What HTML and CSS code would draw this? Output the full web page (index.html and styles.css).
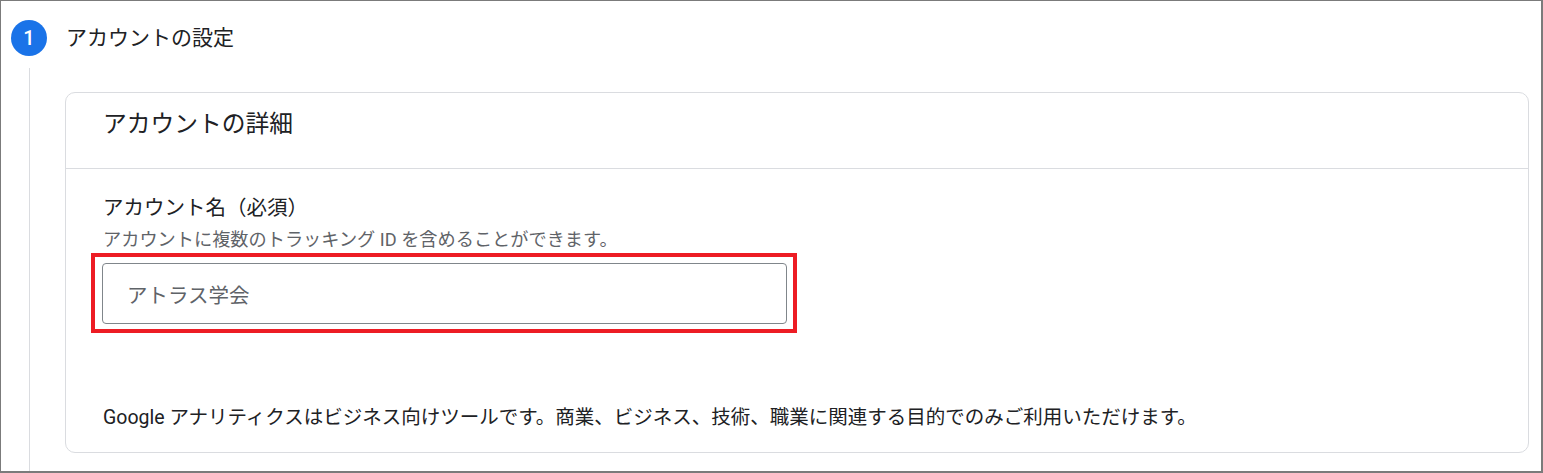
FILE: index.html
```html
<!DOCTYPE html>
<html lang="ja">
  <head>
    <meta charset="UTF-8" />
    <meta name="viewport" content="width=device-width, initial-scale=1.0" />
    <title>アカウントの設定</title>
    <link rel="stylesheet" href="styles.css">
  </head>
  <body>
    <div class="frame">
      <div class="step-head">
        <span class="step-num">1</span>
        <h1 class="step-title">アカウントの設定</h1>
      </div>
      <div class="step-body">
        <section class="card">
          <div class="card-head">アカウントの詳細</div>
          <div class="card-body">
            <label class="field-label" for="account-name">アカウント名（必須）</label>
            <div class="field-hint">アカウントに複数のトラッキング ID を含めることができます。</div>
            <div class="highlight">
              <input type="text" id="account-name" class="field-input" value="アトラス学会" />
            </div>
            <p class="notice">Google アナリティクスはビジネス向けツールです。商業、ビジネス、技術、職業に関連する目的でのみご利用いただけます。</p>
          </div>
        </section>
      </div>
    </div>
  </body>
</html>
```

FILE: styles.css
```css
* {
  box-sizing: border-box;
}
html,
body {
  height: 100%;
  margin: 0;
  background: #fff;
  font-family: Roboto, "Noto Sans CJK JP", sans-serif;
  color: #202124;
}
.frame {
  height: 100%;
  display: flex;
  flex-direction: column;
  border: solid #7b7b7b;
  border-width: 1px 2px 2px 1px;
}
.step-head {
  display: flex;
  align-items: center;
  gap: 19px;
  padding: 19px 0 0 10px;
}
.step-num {
  width: 36px;
  height: 36px;
  border-radius: 50%;
  background: #1a73e8;
  color: #fff;
  font-size: 20px;
  font-weight: 500;
  display: flex;
  align-items: center;
  justify-content: center;
}
.step-title {
  margin: 0;
  font-size: 21px;
  font-weight: 400;
  line-height: 30px;
}
.step-body {
  flex: 1;
  margin: 12px 0 0 28px;
  border-left: 1px solid #dadce0;
  padding: 24px 12px 0 35px;
}
.card {
  border: 1px solid #dadce0;
  border-radius: 10px;
}
.card-head {
  height: 76px;
  padding: 15px 37px 0;
  font-size: 23.75px;
  line-height: 32px;
  border-bottom: 1px solid #dadce0;
}
.card-body {
  padding: 25px 37px 21px;
}
.field-label {
  display: block;
  font-size: 20.5px;
  line-height: 28px;
}
.field-hint {
  margin-top: 6px;
  font-size: 18.2px;
  line-height: 24px;
  color: #5f6368;
}
.highlight {
  width: 706px;
  margin: 1px 0 0 -12px;
  padding: 6px 6px 5px 7px;
  border: 4px solid #ed1c24;
}
.field-input {
  display: block;
  width: 685px;
  height: 61px;
  padding: 0 24px;
  border: 1px solid #80868b;
  border-radius: 4px;
  font-family: inherit;
  font-size: 20.5px;
  color: #5f6368;
  outline: none;
}
.notice {
  margin: 72px 0 0;
  font-size: 19.5px;
  line-height: 26px;
}
```
